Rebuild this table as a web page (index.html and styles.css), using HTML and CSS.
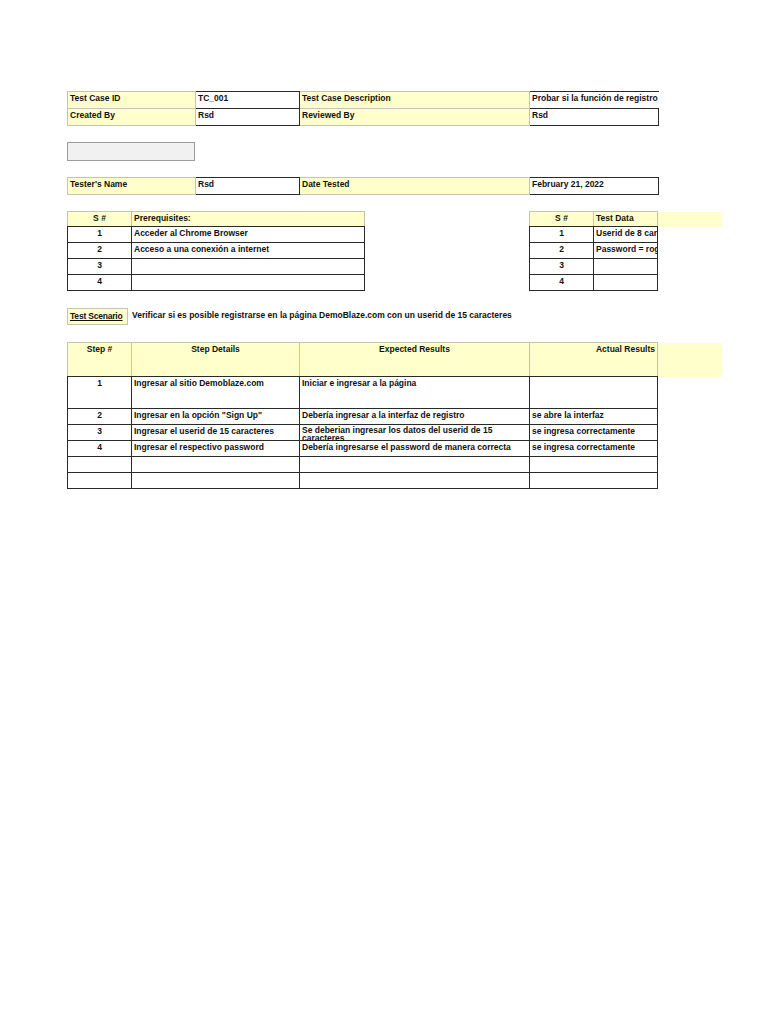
FILE: index.html
```html
<!DOCTYPE html>
<html lang="es">
<head>
<meta charset="utf-8">
<title>Test Case</title>
<link rel="stylesheet" href="styles.css">
</head>
<body>
<div class="sheet">
  <table class="grid info">
    <colgroup><col class="c1"><col class="c2"><col class="c3"><col class="c4"></colgroup>
    <tr>
      <td class="lbl">Test Case ID</td>
      <td class="val">TC_001</td>
      <td class="lbl">Test Case Description</td>
      <td class="val open">Probar si la función de registro</td>
    </tr>
    <tr>
      <td class="lbl">Created By</td>
      <td class="val">Rsd</td>
      <td class="lbl">Reviewed By</td>
      <td class="val">Rsd</td>
    </tr>
  </table>

  <div class="blank"></div>

  <table class="grid info">
    <colgroup><col class="c1"><col class="c2"><col class="c3"><col class="c4"></colgroup>
    <tr>
      <td class="lbl">Tester's Name</td>
      <td class="val">Rsd</td>
      <td class="lbl">Date Tested</td>
      <td class="val">February 21, 2022</td>
    </tr>
  </table>

  <div class="pair">
    <table class="grid list prereq">
      <colgroup><col class="n"><col class="t"></colgroup>
      <tr class="head"><td class="center">S #</td><td>Prerequisites:</td></tr>
      <tr><td class="center">1</td><td>Acceder al Chrome Browser</td></tr>
      <tr><td class="center">2</td><td>Acceso a una conexión a internet</td></tr>
      <tr><td class="center">3</td><td></td></tr>
      <tr><td class="center">4</td><td></td></tr>
    </table>
    <table class="grid list tdata">
      <colgroup><col class="n"><col class="t"><col class="x"></colgroup>
      <tr class="head"><td class="center">S #</td><td>Test Data</td><td class="ext"></td></tr>
      <tr><td class="center">1</td><td class="clip">Userid de 8 cara</td><td class="none"></td></tr>
      <tr><td class="center">2</td><td class="clip">Password = rog</td><td class="none"></td></tr>
      <tr><td class="center">3</td><td></td><td class="none"></td></tr>
      <tr><td class="center">4</td><td></td><td class="none"></td></tr>
    </table>
  </div>

  <div class="scenario">
    <span class="scn-label">Test Scenario</span>
    <span class="scn-text">Verificar si es posible registrarse en la página DemoBlaze.com con un userid de 15 caracteres</span>
  </div>

  <table class="grid steps">
    <colgroup><col class="s1"><col class="s2"><col class="s3"><col class="s4"><col class="x"></colgroup>
    <tr class="head">
      <td class="center">Step #</td>
      <td class="center">Step Details</td>
      <td class="center">Expected Results</td>
      <td class="right">Actual Results</td>
      <td class="ext"></td>
    </tr>
    <tr class="tall">
      <td class="center">1</td>
      <td>Ingresar al sitio Demoblaze.com</td>
      <td>Iniciar e ingresar a la página</td>
      <td></td>
      <td class="none"></td>
    </tr>
    <tr>
      <td class="center">2</td>
      <td>Ingresar en la opción "Sign Up"</td>
      <td>Debería ingresar a la interfaz de registro</td>
      <td>se abre la interfaz</td>
      <td class="none"></td>
    </tr>
    <tr>
      <td class="center">3</td>
      <td>Ingresar el userid de 15 caracteres</td>
      <td><div class="spill">Se deberian ingresar los datos del userid de 15 caracteres</div></td>
      <td>se ingresa correctamente</td>
      <td class="none"></td>
    </tr>
    <tr>
      <td class="center">4</td>
      <td>Ingresar el respectivo password</td>
      <td>Debería ingresarse el password de manera correcta</td>
      <td>se ingresa correctamente</td>
      <td class="none"></td>
    </tr>
    <tr><td></td><td></td><td></td><td></td><td class="none"></td></tr>
    <tr><td></td><td></td><td></td><td></td><td class="none"></td></tr>
  </table>
</div>
</body>
</html>
```

FILE: styles.css
```css
html, body {
  margin: 0;
  padding: 0;
  background: #ffffff;
}

body {
  font-family: "Liberation Sans", Arial, sans-serif;
  font-size: 8.5px;
  font-weight: bold;
  letter-spacing: 0;
  color: #111;
}

.sheet {
  padding: 91px 0 0 67px;
  width: 701px;
}

.grid {
  border-collapse: collapse;
  table-layout: fixed;
}

.grid td {
  padding: 1px 2px 0 2px;
  vertical-align: top;
  white-space: nowrap;
  overflow: hidden;
  line-height: 10px;
}

/* top info blocks */
.info { width: 591px; }
.info .c1 { width: 128px; }
.info .c2 { width: 104px; }
.info .c3 { width: 230px; }
.info .c4 { width: 129px; }

.info td { height: 15px; }

.lbl {
  background: #ffffcc;
  border: 1px solid #c4c4b0;
}

.val {
  background: #ffffff;
  border: 1.5px solid #2a2a2a;
}

.val.open {
  border-right: none;
}

.blank {
  width: 126px;
  height: 17px;
  margin: 16px 0 16px 0;
  background: #f1f1f1;
  border: 1px solid #9c9c9c;
}

/* prerequisite / test data */
.pair {
  display: flex;
  gap: 164px;
  margin-top: 16px;
}

.list td {
  height: 14px;
  border: 1px solid #2a2a2a;
}

.list .head td {
  height: 13px;
  background: #ffffcc;
  border: 1px solid #c4c4b0;
  border-bottom: 1.5px solid #2a2a2a;
}

.prereq { width: 297px; }
.prereq .n { width: 64px; }
.prereq .t { width: 233px; }

.tdata { width: 193px; }
.tdata .n { width: 64px; }
.tdata .t { width: 64px; }
.tdata .x { width: 65px; }

.grid td.ext,
.list .head td.ext,
.steps .head td.ext {
  background: #ffffcc;
  border: none;
}

.grid td.none {
  border: none;
  background: transparent;
}

.center { text-align: center; }
.right { text-align: right; }

/* scenario */
.scenario {
  display: flex;
  align-items: flex-start;
  gap: 4px;
  margin-top: 17px;
}

.scn-label {
  box-sizing: border-box;
  width: 61px;
  height: 17px;
  padding: 2px 0 0 2px;
  background: #ffffcc;
  border: 1px solid #c4c4b0;
  text-decoration: underline;
  line-height: 10px;
  letter-spacing: -0.2px;
}

.scn-text {
  padding-top: 2px;
  line-height: 10px;
}

/* steps */
.steps {
  width: 655px;
  margin-top: 17px;
}

.steps .s1 { width: 64px; }
.steps .s2 { width: 168px; }
.steps .s3 { width: 230px; }
.steps .s4 { width: 128px; }
.steps .x { width: 65px; }

.steps td {
  height: 14px;
  border: 1px solid #2a2a2a;
}

.steps tr.head td {
  height: 32px;
  background: #ffffcc;
  border: 1px solid #c4c4b0;
  border-bottom: 1.5px solid #2a2a2a;
}

.steps tr.tall td { height: 30px; }

.steps td .spill {
  height: 14px;
  white-space: normal;
  width: 200px;
  line-height: 8px;
  overflow: visible;
}

.steps td:has(.spill) { overflow: visible; }
```
